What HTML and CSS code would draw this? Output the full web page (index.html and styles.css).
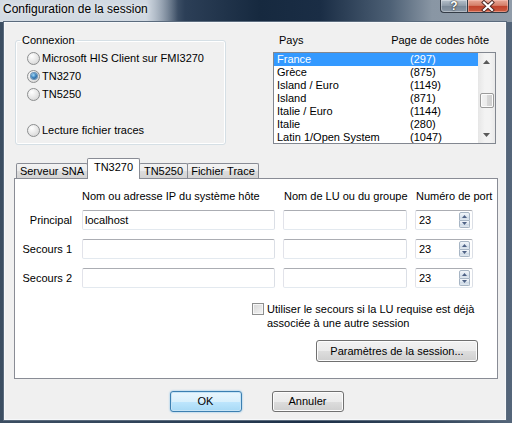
FILE: index.html
```html
<!DOCTYPE html>
<html lang="fr">
<head>
<meta charset="utf-8">
<title>Configuration de la session</title>
<link rel="stylesheet" href="styles.css">
</head>
<body>
<div class="window">
  <div class="titlebar">
    <span class="title">Configuration de la session</span>
    <div class="caption-buttons">
      <div class="cap help">?</div>
      <div class="cap close">
        <svg width="40" height="12" viewBox="0 0 40 12">
          <path d="M16 2.5 L24 10 M24 2.5 L16 10" stroke="#4a2622" stroke-width="4" stroke-linecap="square"/>
          <path d="M16 2.5 L24 10 M24 2.5 L16 10" stroke="#ffffff" stroke-width="2.2" stroke-linecap="square"/>
        </svg>
      </div>
    </div>
  </div>
  <div class="client">
    <div class="top">
      <fieldset class="group">
        <legend>Connexion</legend>
        <div class="radios">
          <div class="radio"><span class="rb"></span>Microsoft HIS Client sur FMI3270</div>
          <div class="radio"><span class="rb on"></span>TN3270</div>
          <div class="radio"><span class="rb"></span>TN5250</div>
          <div class="radio-gap"></div>
          <div class="radio"><span class="rb"></span>Lecture fichier traces</div>
        </div>
      </fieldset>
      <div class="codes">
        <div class="codes-head"><span class="h-pays">Pays</span><span class="h-code">Page de codes hôte</span></div>
        <div class="listbox">
          <div class="items">
            <div class="item sel"><span class="c1">France</span><span>(297)</span></div>
            <div class="item"><span class="c1">Grèce</span><span>(875)</span></div>
            <div class="item"><span class="c1">Island / Euro</span><span>(1149)</span></div>
            <div class="item"><span class="c1">Island</span><span>(871)</span></div>
            <div class="item"><span class="c1">Italie / Euro</span><span>(1144)</span></div>
            <div class="item"><span class="c1">Italie</span><span>(280)</span></div>
            <div class="item"><span class="c1">Latin 1/Open System</span><span>(1047)</span></div>
          </div>
          <div class="vscroll">
            <div class="sb-btn"><svg width="7" height="4" viewBox="0 0 7 4"><polygon points="0,4 3.5,0 7,4" fill="#5a5a5a"/></svg></div>
            <div class="sb-track"><div class="sb-thumb"></div></div>
            <div class="sb-btn"><svg width="7" height="4" viewBox="0 0 7 4"><polygon points="0,0 3.5,4 7,0" fill="#5a5a5a"/></svg></div>
          </div>
        </div>
      </div>
    </div>

    <div class="tabs">
      <div class="tab t1">Serveur SNA</div>
      <div class="tab t2 active">TN3270</div>
      <div class="tab t3">TN5250</div>
      <div class="tab t4">Fichier Trace</div>
    </div>
    <div class="panel">
      <div class="grid head">
        <span></span>
        <span class="hcell ip">Nom ou adresse IP du système hôte</span>
        <span class="hcell">Nom de LU ou du groupe</span>
        <span class="hcell">Numéro de port</span>
      </div>
      <div class="grid rows">
        <span class="lbl">Principal</span>
        <div class="textbox">localhost</div>
        <div class="textbox"></div>
        <div class="textbox spin"><span>23</span><span class="spin-btns"><span class="sp up"><svg width="5" height="3" viewBox="0 0 5 3"><polygon points="0,3 2.5,0 5,3" fill="#4d6185"/></svg></span><span class="sp dn"><svg width="5" height="3" viewBox="0 0 5 3"><polygon points="0,0 2.5,3 5,0" fill="#4d6185"/></svg></span></span></div>

        <span class="lbl">Secours 1</span>
        <div class="textbox"></div>
        <div class="textbox"></div>
        <div class="textbox spin"><span>23</span><span class="spin-btns"><span class="sp up"><svg width="5" height="3" viewBox="0 0 5 3"><polygon points="0,3 2.5,0 5,3" fill="#4d6185"/></svg></span><span class="sp dn"><svg width="5" height="3" viewBox="0 0 5 3"><polygon points="0,0 2.5,3 5,0" fill="#4d6185"/></svg></span></span></div>

        <span class="lbl">Secours 2</span>
        <div class="textbox"></div>
        <div class="textbox"></div>
        <div class="textbox spin"><span>23</span><span class="spin-btns"><span class="sp up"><svg width="5" height="3" viewBox="0 0 5 3"><polygon points="0,3 2.5,0 5,3" fill="#4d6185"/></svg></span><span class="sp dn"><svg width="5" height="3" viewBox="0 0 5 3"><polygon points="0,0 2.5,3 5,0" fill="#4d6185"/></svg></span></span></div>
      </div>
      <div class="check-row">
        <span class="cb"></span>
        <span class="cb-text">Utiliser le secours si la LU requise est déjà associée à une autre session</span>
      </div>
      <div class="btn params">Paramètres de la session...</div>
    </div>
    <div class="actions">
      <div class="btn default">OK</div>
      <div class="btn">Annuler</div>
    </div>
  </div>
</div>
</body>
</html>
```

FILE: styles.css
```css
* { box-sizing: border-box; }
html, body { margin: 0; padding: 0; }
body {
  width: 512px;
  height: 423px;
  overflow: hidden;
  font-family: "Liberation Sans", Arial, sans-serif;
  font-size: 11px;
  color: #000;
  background: #2c3f55;
}
.window {
  width: 512px;
  height: 423px;
  display: flex;
  flex-direction: column;
  background: linear-gradient(90deg, #3c4e62 0, #2a3e55 40%, #1c2f47 60%, #34475c 85%, #55667a 100%);
}

/* title bar */
.titlebar {
  height: 22px;
  flex: none;
  display: flex;
  align-items: flex-start;
  background: linear-gradient(90deg, #a9b5c2 0, #8a99aa 140px, #2c3f57 185px, #16293f 260px, #1a2d45 320px, #4d6075 390px, #8996a4 432px, #909ca9 512px);
}
.title {
  height: 22px;
  padding: 0 30px 0 3px;
  font-size: 12px;
  line-height: 19px;
  white-space: nowrap;
  background: linear-gradient(90deg, #d3dbe3 0, #d0d8e1 82%, rgba(200,210,222,0) 100%);
  text-shadow: 0 0 5px #fff;
}
.caption-buttons {
  margin-left: auto;
  margin-right: 3px;
  display: flex;
}
.cap {
  height: 13px;
  border: 1px solid #333b46;
  border-top: none;
}
.help {
  width: 27px;
  border-radius: 0 0 0 4px;
  border-right: none;
  background: linear-gradient(#b5c0cb, #8d9aa8 50%, #7a8897 51%, #8b98a6);
  color: #fff;
  font-weight: bold;
  font-size: 12px;
  line-height: 12px;
  text-align: center;
  text-shadow: 0 0 2px #222, 0 0 1px #222;
  box-shadow: inset 0 0 0 1px rgba(255,255,255,0.35);
}
.close {
  width: 42px;
  border-radius: 0 0 4px 0;
  background: linear-gradient(#e8a998, #d5806a 45%, #c0432c 52%, #cc5a3f);
  box-shadow: inset 0 0 0 1px rgba(255,210,200,0.45);
}
.close svg { display: block; }

/* client area */
.client {
  flex: 1;
  margin: 0 6px 3px 4px;
  border: 1px solid #f6f8fa;
  box-shadow: 0 0 0 1px #5b6b7d;
  background: #f0f0f0;
  display: flex;
  flex-direction: column;
}
.top {
  height: 135px;
  flex: none;
  padding: 11px 0 0 10px;
  display: flex;
  align-items: flex-start;
}
.group {
  width: 211px;
  height: 111px;
  margin: 0;
  padding: 0;
  min-width: 0;
  border: 1px solid #d5dfe5;
  border-radius: 3px;
  box-shadow: inset 0 0 0 1px #fff;
}
.group legend {
  margin-left: 4px;
  padding: 0 2px;
  line-height: 13px;
}
.radios {
  padding: 2px 0 0 11px;
  display: flex;
  flex-direction: column;
}
.radio {
  height: 18px;
  display: flex;
  align-items: center;
  gap: 2px;
  white-space: nowrap;
}
.radio-gap { height: 18px; }
.rb {
  width: 13px;
  height: 13px;
  border-radius: 50%;
  border: 1px solid #8c8e8f;
  background: radial-gradient(circle at 35% 30%, #ffffff 0, #eaeaea 45%, #cfcfcf 100%);
  display: flex;
  align-items: center;
  justify-content: center;
  flex: none;
}
.rb.on::after {
  content: "";
  width: 6px;
  height: 6px;
  border-radius: 50%;
  background: radial-gradient(circle at 40% 35%, #a8dcf8 0, #3f86c0 45%, #18487a 100%);
  box-shadow: 0 0 0 1px #6b94b8;
}

/* code page list */
.codes {
  width: 223px;
  margin-left: 47px;
}
.codes-head {
  display: flex;
  height: 13px;
  line-height: 13px;
  white-space: nowrap;
}
.h-pays { padding-left: 6px; }
.h-code { margin-left: auto; padding-right: 7px; }
.listbox {
  margin-top: 5px;
  height: 92px;
  border: 1px solid #828790;
  background: #fff;
  display: flex;
}
.items {
  flex: 1;
  overflow: hidden;
}
.item {
  display: flex;
  height: 13px;
  line-height: 13px;
  padding-left: 3px;
  white-space: nowrap;
}
.item .c1 { width: 133px; }
.item.sel {
  background: #3399ff;
  color: #fff;
}
.vscroll {
  width: 17px;
  flex: none;
  display: flex;
  flex-direction: column;
  background: linear-gradient(90deg, #e6e6e6 0, #f3f3f3 40%, #f3f3f3 70%, #e9e9e9 100%);
}
.sb-btn {
  height: 17px;
  display: flex;
  align-items: center;
  justify-content: center;
}
.sb-btn svg { display: block; }
.sb-track { flex: 1; padding: 23px 1px 0 2px; }
.sb-thumb {
  height: 15px;
  border: 1px solid #9a9a9a;
  border-radius: 2px;
  background: linear-gradient(90deg, #f2f2f2 0, #ebebeb 50%, #d8d8d8 51%, #cdcdcd 100%);
  box-shadow: inset 0 0 0 1px #fbfbfb;
}

/* tabs */
.tabs {
  height: 20px;
  flex: none;
  margin-left: 9px;
  padding-left: 2px;
  display: flex;
  align-items: flex-end;
}
.tab {
  height: 15px;
  border: 1px solid #898c95;
  border-bottom: none;
  border-radius: 2px 2px 0 0;
  background: linear-gradient(#f3f3f3, #ebebeb 50%, #dddddd 51%, #d3d3d3);
  line-height: 14px;
  text-align: center;
  white-space: nowrap;
}
.t1 { width: 72px; }
.t2 { width: 53px; margin-left: -1px; }
.t3 { width: 49px; margin-left: -1px; }
.t4 { width: 72px; margin-left: -1px; }
.tab.active {
  height: 21px;
  margin-bottom: -1px;
  padding-top: 1px;
  background: #fff;
  position: relative;
  z-index: 1;
}

/* tab panel */
.panel {
  height: 201px;
  flex: none;
  margin: 0 7px 0 9px;
  border: 1px solid #898c95;
  background: #fff;
  padding-top: 11px;
  display: flex;
  flex-direction: column;
}
.grid {
  display: grid;
  grid-template-columns: 59px 193px 124px 58px;
  column-gap: 8px;
}
.head {
  height: 13px;
  line-height: 13px;
  margin-bottom: 7px;
  white-space: nowrap;
}
.hcell { padding-left: 1px; }
.hcell.ip { padding-left: 0; }
.rows {
  grid-auto-rows: 20px;
  row-gap: 9px;
}
.lbl {
  line-height: 20px;
  text-align: right;
  padding-right: 2px;
  white-space: nowrap;
}
.textbox {
  height: 20px;
  border: 1px solid;
  border-color: #abadb3 #dbdfe6 #e3e9ef #e2e3ea;
  border-radius: 2px;
  background: #fff;
  line-height: 18px;
  padding-left: 2px;
  white-space: nowrap;
}
.textbox.spin {
  display: flex;
  align-items: center;
  padding-left: 3px;
}
.spin-btns {
  margin-left: auto;
  margin-right: 2px;
  width: 11px;
  height: 16px;
  display: flex;
  flex-direction: column;
}
.sp {
  flex: 1;
  border: 1px solid #a7b5c4;
  background: linear-gradient(#f2f6fa, #dde6ef 50%, #cdd9e5 51%, #dfe7ef);
  display: flex;
  align-items: center;
  justify-content: center;
}
.sp.up { border-radius: 2px 2px 0 0; }
.sp.dn { border-top: none; border-radius: 0 0 2px 2px; }
.sp svg { display: block; }

.check-row {
  margin: 14px 0 0 237px;
  display: flex;
  align-items: flex-start;
  gap: 3px;
}
.cb {
  width: 12px;
  height: 12px;
  margin-top: 1px;
  flex: none;
  border: 1px solid #8e8f8f;
  background: linear-gradient(135deg, #d6d6d6, #f4f4f4);
  box-shadow: inset 0 0 0 1px #f6f6f6;
}
.cb-text {
  width: 210px;
  line-height: 14px;
}

/* buttons */
.btn {
  height: 21px;
  border: 1px solid #707070;
  border-radius: 3px;
  background: linear-gradient(#f2f2f2 0, #ebebeb 50%, #dddddd 51%, #cfcfcf 100%);
  box-shadow: inset 0 0 0 1px #fcfcfc;
  line-height: 19px;
  text-align: center;
  white-space: nowrap;
}
.params {
  width: 162px;
  height: 22px;
  line-height: 20px;
  margin: 10px 19px 0 0;
  align-self: flex-end;
}
.actions {
  margin-top: 12px;
  padding-left: 3px;
  display: flex;
  justify-content: center;
  gap: 30px;
}
.actions .btn { width: 72px; }
.btn.default {
  border-color: #3c7fb1;
  background: linear-gradient(#eaf6fd 0, #d9f0fc 50%, #bee6fd 51%, #a7d9f5 100%);
  box-shadow: inset 0 0 0 1px #c6e4f6, 0 0 2px #6cb6e6;
}
```
